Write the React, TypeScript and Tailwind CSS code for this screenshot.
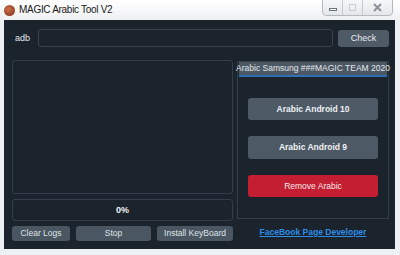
import React from "react";

export default function App() {
  const f = { fontFamily: '"Liberation Sans", Arial, sans-serif' };
  return (
    <div className="w-[400px] h-[255px] bg-[#eef1f4] relative overflow-hidden" style={f}>
      {/* title bar */}
      <div className="h-[20px] flex items-center bg-gradient-to-b from-[#ffffff] to-[#eef0f2] relative">
        <div className="ml-[4px] w-[11px] h-[11px] rounded-full bg-[radial-gradient(circle_at_40%_40%,#d0704a,#7a2e18)]" />
        <span className="ml-[4px] text-[10px] tracking-[-0.3px] text-[#1a1a1a] leading-none whitespace-nowrap">MAGIC Arabic Tool V2</span>
        <div className="absolute right-[7px] top-[-1px] h-[17px] flex border border-[#b5bac0] rounded-b-[4px] bg-gradient-to-b from-[#f6f7f8] to-[#e4e7ea]">
          <div className="w-[20px] flex items-center justify-center border-r border-[#c6cacf]">
            <div className="w-[8px] h-[3px] mt-[4px] border border-[#6a7480] bg-white" />
          </div>
          <div className="w-[20px] flex items-center justify-center border-r border-[#c6cacf]">
            <div className="w-[7px] h-[7px] border border-[#c8ccd0]" />
          </div>
          <div className="w-[29px] flex items-center justify-center">
            <svg width="9" height="9" viewBox="0 0 9 9">
              <path d="M1 1 L8 8 M8 1 L1 8" stroke="#8a929c" strokeWidth="2" fill="none" />
            </svg>
          </div>
        </div>
      </div>
      {/* dark body */}
      <div className="ml-[4px] w-[391px] h-[229px] bg-[#1b232c] flex flex-col">
        <div className="flex items-center mt-[9px] h-[18px]">
          <span className="ml-[11px] w-[23px] text-[9px] text-[#e6e9ec] leading-none">adb</span>
          <div className="w-[295px] h-[18px] border border-[#3a444f] rounded-[3px] bg-[#1b232c]" />
          <div className="ml-[5px] w-[51px] h-[17px] rounded-[3px] bg-[#4e5a66] flex items-center justify-center text-[9px] text-[#e8ebee] leading-none">
            Check
          </div>
        </div>
        <div className="flex mt-[13px]">
          <div className="ml-[8px] w-[221px] flex flex-col">
            <div className="h-[134px] border border-[#343e49] rounded-[3px]" />
            <div className="mt-[5px] h-[22px] border border-[#343e49] rounded-[3px] flex items-center justify-center text-[9px] font-bold text-[#f2f4f6] leading-none">
              0%
            </div>
            <div className="mt-[5px] flex gap-[6px] h-[15px]">
              <div className="w-[58px] rounded-[3px] bg-[#4a5661] flex items-center justify-center text-[8.5px] text-[#dfe3e7] leading-none whitespace-nowrap">Clear Logs</div>
              <div className="w-[75px] rounded-[3px] bg-[#4a5661] flex items-center justify-center text-[8.5px] text-[#dfe3e7] leading-none whitespace-nowrap">Stop</div>
              <div className="w-[76px] rounded-[3px] bg-[#4a5661] flex items-center justify-center text-[8.5px] text-[#dfe3e7] leading-none whitespace-nowrap">Install KeyBoard</div>
            </div>
          </div>
          <div className="ml-[4px] w-[152px] flex flex-col">
            <div className="mt-[1px] h-[158px] border border-[#343e49] flex flex-col">
              <div className="h-[15px] mx-[1px] bg-[#4b5763] border-b-2 border-[#2f6fb3] flex items-center justify-center text-[8.5px] text-[#e4e8ec] leading-none whitespace-nowrap">
                Arabic Samsung ###MAGIC TEAM 2020
              </div>
              <div className="mt-[21px] mx-[10px] h-[22px] rounded-[3px] bg-[#4d5965] flex items-center justify-center text-[8.5px] font-bold text-[#eef1f4] leading-none whitespace-nowrap">
                Arabic Android 10
              </div>
              <div className="mt-[16px] mx-[10px] h-[23px] rounded-[3px] bg-[#4d5965] flex items-center justify-center text-[8.5px] font-bold text-[#eef1f4] leading-none whitespace-nowrap">
                Arabic Android 9
              </div>
              <div className="mt-[16px] mx-[10px] h-[22px] rounded-[3px] bg-[#c41e32] flex items-center justify-center text-[8.5px] text-[#f5e8ea] leading-none whitespace-nowrap">
                Remove Arabic
              </div>
            </div>
            <div className="mt-[9px] text-center text-[8.5px] font-bold text-[#2e8ee8] underline leading-none whitespace-nowrap">
              FaceBook Page Developer
            </div>
          </div>
        </div>
      </div>
    </div>
  );
}
